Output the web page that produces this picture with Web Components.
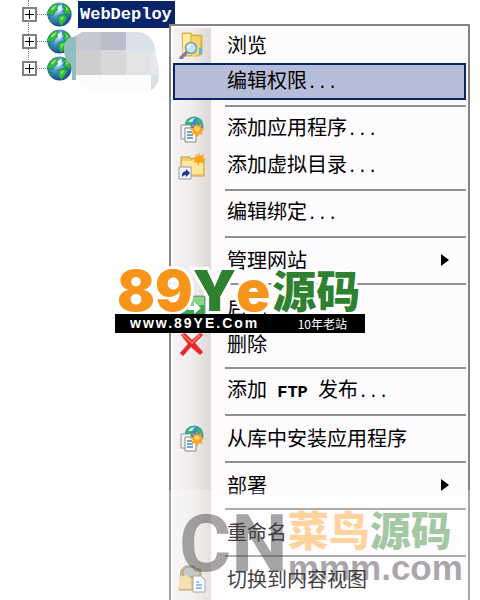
<!DOCTYPE html>
<html lang="zh-CN">
<head>
<meta charset="utf-8">
<title>WebDeploy</title>
<style>
  body {
    margin: 0;
    background: #fff;
    overflow: hidden;
  }
</style>
</head>
<body>
<site-manager></site-manager>

<template id="app-icon">
  <style>
    :host { display: block; width: 28px; height: 28px; }
    svg { display: none; width: 100%; height: 100%; }
    :host([name="globe"]) .globe,
    :host([name="browse"]) .browse,
    :host([name="app"]) .app,
    :host([name="vdir"]) .vdir,
    :host([name="start"]) .start,
    :host([name="delete"]) .delete,
    :host([name="content"]) .content { display: block; }
  </style>
  <svg class="globe" viewBox="0 0 28 28" aria-hidden="true">
    <defs>
      <radialGradient id="sea" cx=".4" cy=".3" r=".75">
        <stop offset="0" stop-color="#c9e9ff"/><stop offset=".4" stop-color="#4a94e0"/><stop offset="1" stop-color="#123c94"/>
      </radialGradient>
    </defs>
    <circle cx="14" cy="14" r="12.5" fill="url(#sea)"/>
    <path d="M3 9q3-6 9-6l2 2-3 2 1 2-3 3-2 3-4-1-2 1q0-4 2-6zM18 3q6 2 8 8l-1 4-3-2-2 1-2-4 2-2-3-2zM13 15l6-1 3 3-2 4-4 5-3-4-1-4zM3 17l3 2 2 4q-4-2-5-6z" fill="#32b844" stroke="#16782b" stroke-width=".6"/>
    <path d="M5 8q3-3 6-4l-2 4-3 2zM20 5l3 4-2 1zM15 17l4-1-3 5z" fill="#8be667"/>
    <path d="M12 6l4-2 1 5-4 3z" fill="#d8f2ff"/>
  </svg>
  <svg class="browse" viewBox="0 0 28 28" aria-hidden="true">
    <path d="M4 2h9l2 2h9v19l-4 2H5z" fill="#eac04d" stroke="#d3a640" stroke-width=".8"/>
    <path d="M5 3h7l1 21H5z" fill="#fff0a4"/>
    <path d="M14 5l8 1v17l-8 3z" fill="#f7d568"/>
    <path d="M21 17l3-1v7l-3 1z" fill="#58bce2"/>
    <path d="M9 21l-6 6" stroke="#7c8795" stroke-width="3.5" stroke-linecap="round"/>
    <circle cx="13" cy="17" r="5.5" fill="#c5e5fa" stroke="#7c9ab5" stroke-width="1.5"/>
    <path d="M10 17q0-3 3-3" fill="none" stroke="#fff" stroke-width="2"/>
  </svg>
  <svg class="app" viewBox="0 0 28 28" aria-hidden="true">
    <circle cx="16" cy="11" r="9.5" fill="#358bd0"/>
    <path d="M7 9q3-7 9-7l-1 5-4 4zM18 3q5 1 7 7l-5-1z" fill="#37b962"/>
    <path d="M10 7q3-4 7-4l-3 4z" fill="#caf4ff"/>
    <path d="M3 10h10v14H3z" fill="#f4f4f4" stroke="#929292"/>
    <path d="M7 13h8l3 3v11H7z" fill="#fff" stroke="#858585"/>
    <path d="M9 17h5M9 20h6M9 23h6" stroke="#3d82c4" stroke-width="1.5"/>
    <path d="M18 7l2 4 4-2-1 4 4 1-4 2 2 4-4-1-2 4-1-4-5 1 2-4-4-2 5-1-2-4 4 2z" fill="#ffa51e"/>
    <circle cx="19" cy="14" r="2.5" fill="#ffdc68"/>
  </svg>
  <svg class="vdir" viewBox="0 0 28 28" aria-hidden="true">
    <path d="M3 5h9l2 3h12v16H3z" fill="#f5cf6e" stroke="#c69b45"/>
    <path d="M4 9h10l2-2h9v14l-21 2z" fill="#ffe698"/>
    <path d="M21 0l1 4 4-2-1 4 4 1-4 1 1 4-4-2-2 4-1-4-4 1 2-3-4-2 5-1-1-3 3 2z" fill="#f8a11b"/>
    <path d="M1 15h12v12H1z" fill="#f3f5fb" stroke="#929aaf"/>
    <path d="M4 25q-1-5 4-6v-2l4 4-4 4v-2q-3 0-4 2z" fill="#25328e"/>
  </svg>
  <svg class="start" viewBox="0 0 28 28" aria-hidden="true">
    <path d="M3 3h24v22H3z" fill="#38a653" stroke="#8ca994"/>
    <path d="M4 4h22v8q-12 0-22 6z" fill="#8bd28b"/>
    <path d="M10 13h6V9l7 6-7 6v-4h-6z" fill="#fff"/>
  </svg>
  <svg class="delete" viewBox="0 0 28 28" aria-hidden="true">
    <path d="M3 5l4-2 7 7 8-7 3 2-8 8 8 9-3 3-9-8-8 9-3-3 8-9z" fill="#ed2526" stroke="#c98080" stroke-width=".8"/>
    <path d="M5 5l9 8 8-8" fill="none" stroke="#ff7d72" stroke-width="1.5"/>
  </svg>
  <svg class="content" viewBox="0 0 28 28" aria-hidden="true">
    <path d="M3 5l4-4h9l2 3h5v17l-4 4H1z" fill="#cfb573" stroke="#a98b4e"/>
    <path d="M5 5l3-3h7l2 4h5v6H5z" fill="#b4b4b0" stroke="#777"/>
    <path d="M1 12l8-2 4 3v11H1z" fill="#f1d696"/>
    <path d="M15 11h8l4 4v12H15z" fill="#fff" stroke="#888"/>
    <path d="M18 17h3M18 20h6M18 23h6" stroke="#4d8fdb" stroke-width="1.5"/>
  </svg>
</template>

<template id="tree-node">
  <style>
    :host { display: flex; align-items: center; height: 27px; }
    .toggle {
      flex: none;
      width: 15px;
      height: 15px;
      padding: 0;
      border: 2px solid #808080;
      border-radius: 0;
      background: linear-gradient(#000, #000) center / 9px 1px no-repeat,
        linear-gradient(#000, #000) center / 1px 9px no-repeat, #fff;
    }
    .dots { flex: none; width: 9px; border-top: 1px dotted #777; }
    app-icon { flex: none; width: 27px; height: 27px; }
    .label {
      margin-left: 5px;
      padding: 0 3px 0 2px;
      font: bold 17px/27px "Liberation Mono", monospace;
      color: #fff;
      background: #0a246a;
    }
    .label.empty { display: none; }
  </style>
  <button class="toggle" aria-label="+"></button><span class="dots"></span><app-icon name="globe"></app-icon>
  <span class="label"><slot></slot></span>
</template>

<template id="site-tree">
  <style>
    :host { display: block; position: relative; padding: 1px 0 0 22px; }
    .line {
      position: absolute;
      left: 28px;
      top: 0;
      height: 70px;
      border-left: 1px dotted #777;
    }
    tree-node { position: relative; }
    .mosaic { position: absolute; left: 64px; top: 31px; width: 96px; height: 62px; }
  </style>
  <div class="line"></div>
  <tree-node>WebDeploy</tree-node>
  <tree-node empty></tree-node>
  <tree-node empty></tree-node>
  <svg class="mosaic" viewBox="0 0 96 62" aria-hidden="true">
    <clipPath id="blob"><path d="M0 14q2-8 10-8l8-5h57q13 2 16 16l4 22q1 14-7 20l-14 2H38q-20-3-26-12H8V34Q-1 30 0 14z"/></clipPath>
    <g clip-path="url(#blob)">
      <path d="M0 0h12v62H0z" fill="#91bfc1"/>
      <path d="M12 0h25v19H12z" fill="#c5c8d3"/>
      <path d="M37 0h25v19H37z" fill="#babdcb"/>
      <path d="M62 0h34v19H62z" fill="#dce0ed"/>
      <path d="M12 19h25v25H12z" fill="#cdcdce"/>
      <path d="M37 19h25v25H37z" fill="#d8d8da"/>
      <path d="M62 19h25v25H62z" fill="#e2e3e4"/>
      <path d="M87 19h9v25h-9z" fill="#e5e7ed"/>
      <path d="M12 44h75v18H12z" fill="#fbfbfc"/>
      <path d="M87 44h9v18h-9z" fill="#dadee6"/>
    </g>
  </svg>
</template>

<template id="menu-item">
  <style>
    :host { display: block; }
    button {
      display: flex;
      align-items: center;
      width: 100%;
      height: 37px;
      padding: 0 15px 0 3px;
      border: 2px solid transparent;
      border-radius: 0;
      background: none;
      font: 20px/24px "Noto Sans CJK SC", sans-serif;
      color: #000;
      text-align: left;
    }
    :host([selected]) button { border-color: #0a246a; background: #b6bdd8; }
    app-icon { flex: none; margin-right: 21px; }
    .text { flex: 1; white-space: pre; }
    .arrow { display: none; border: 6px solid transparent; border-left: 8px solid #000; border-right: 0; }
    :host([submenu]) .arrow { display: block; }
  </style>
  <button role="menuitem"><app-icon></app-icon><span class="text"><slot></slot></span><span class="arrow"></span></button>
</template>

<template id="menu-separator">
  <style>
    :host { display: block; height: 10px; padding: 5px 0 0 52px; box-sizing: border-box; }
    div { height: 2px; background: #918f92; }
  </style>
  <div></div>
</template>

<template id="context-menu">
  <style>
    :host {
      display: block;
      box-sizing: border-box;
      padding: 0 2px 6px;
      border: 2px solid #858386;
      background: linear-gradient(90deg, #f7f3f5, #f0ecec 50%, #ddd8d4) 2px 2px / 38px 100% no-repeat, #fefbfe;
    }
    .half { font: bold 17px/24px "Liberation Mono", monospace; }
    .dots { font-weight: normal; }
  </style>
  <menu-item icon="browse">浏览</menu-item>
  <menu-item selected>编辑权限<span class="half dots">...</span></menu-item>
  <menu-separator></menu-separator>
  <menu-item icon="app">添加应用程序<span class="half dots">...</span></menu-item>
  <menu-item icon="vdir">添加虚拟目录<span class="half dots">...</span></menu-item>
  <menu-separator></menu-separator>
  <menu-item>编辑绑定<span class="half dots">...</span></menu-item>
  <menu-separator></menu-separator>
  <menu-item submenu>管理网站</menu-item>
  <menu-separator></menu-separator>
  <menu-item icon="start">启动</menu-item>
  <menu-item icon="delete">删除</menu-item>
  <menu-separator></menu-separator>
  <menu-item>添加<span class="half"> FTP </span>发布<span class="half dots">...</span></menu-item>
  <menu-separator></menu-separator>
  <menu-item icon="app">从库中安装应用程序</menu-item>
  <menu-separator></menu-separator>
  <menu-item submenu>部署</menu-item>
  <menu-separator></menu-separator>
  <menu-item>重命名</menu-item>
  <menu-separator></menu-separator>
  <menu-item icon="content">切换到内容视图</menu-item>
</template>

<template id="brand-banner">
  <style>
    :host { display: block; width: 250px; pointer-events: none; }
    .name {
      display: flex;
      align-items: flex-start;
      height: 47px;
      padding-left: 2px;
      font: 900 56px/48px Inter, sans-serif;
      color: #2e812f;
      -webkit-text-stroke: 6px #fff;
      paint-order: stroke fill;
      white-space: nowrap;
    }
    .gold { color: #f7941a; }
    .cjk { margin-left: 2px; font: 900 44px/44px "Noto Sans CJK SC", sans-serif; }
    .bar {
      position: relative;
      display: flex;
      align-items: center;
      justify-content: space-between;
      height: 19px;
      padding: 0 18px 0 15px;
      background: #000;
      color: #fff;
      font: bold 14px/19px "Liberation Sans", sans-serif;
    }
    .url { letter-spacing: 2px; }
    .age { font: 12px/19px "Noto Sans CJK SC", sans-serif; }
  </style>
  <div class="name"><span class="gold">89</span><span>Y</span><span class="gold">e</span><span class="cjk">源码</span></div>
  <div class="bar"><span class="url">www.89YE.Com</span><span class="age">10年老站</span></div>
</template>

<template id="corner-mark">
  <style>
    :host {
      display: flex;
      box-sizing: border-box;
      height: 110px;
      padding: 14px 0 0 10px;
      background: rgba(255, 255, 255, .25);
      pointer-events: none;
      white-space: nowrap;
    }
    .cn { font: bold 80px/80px Roboto, sans-serif; color: rgba(60, 58, 60, .45); }
    .cjk { font: 900 41px/48px "Noto Sans CJK SC", sans-serif; color: rgba(63, 143, 63, .47); }
    .gold { color: rgba(255, 165, 50, .47); }
    .domain { font: bold 35px/32px "Liberation Sans", sans-serif; color: rgba(60, 58, 60, .45); }
  </style>
  <div class="cn">CN</div>
  <div class="side">
    <div class="cjk"><span class="gold">菜鸟</span>源码</div>
    <div class="domain">mmm.com</div>
  </div>
</template>

<template id="site-manager">
  <style>
    :host { display: block; position: relative; height: 100vh; overflow: hidden; }
    context-menu { position: absolute; left: 169px; right: 10px; top: 24px; }
    brand-banner { position: absolute; left: 115px; top: 267px; }
    corner-mark { position: absolute; left: 169px; right: 10px; top: 490px; }
  </style>
  <site-tree></site-tree>
  <context-menu role="menu"></context-menu>
  <corner-mark></corner-mark>
  <brand-banner></brand-banner>
</template>

<script>
  class TemplateElement extends HTMLElement {
    constructor() {
      super();
      const template = document.getElementById(this.localName);
      const shadowRoot = this.attachShadow({ mode: 'open' });
      shadowRoot.appendChild(template.content.cloneNode(true));
    }
  }

  class AppIcon extends TemplateElement {}

  class TreeNode extends TemplateElement {
    connectedCallback() {
      const isEmpty = this.hasAttribute('empty');
      this.shadowRoot.querySelector('.label').classList.toggle('empty', isEmpty);
    }
  }

  class MenuItem extends TemplateElement {
    connectedCallback() {
      const icon = this.getAttribute('icon');
      if (icon) {
        this.shadowRoot.querySelector('app-icon').setAttribute('name', icon);
      }
    }
  }

  customElements.define('app-icon', AppIcon);
  customElements.define('tree-node', TreeNode);
  customElements.define('site-tree', class extends TemplateElement {});
  customElements.define('menu-item', MenuItem);
  customElements.define('menu-separator', class extends TemplateElement {});
  customElements.define('context-menu', class extends TemplateElement {});
  customElements.define('brand-banner', class extends TemplateElement {});
  customElements.define('corner-mark', class extends TemplateElement {});
  customElements.define('site-manager', class extends TemplateElement {});
</script>
</body>
</html>
